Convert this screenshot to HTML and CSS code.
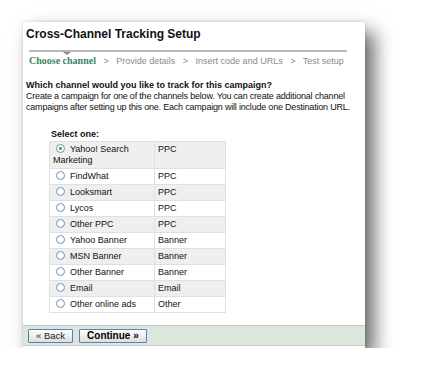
FILE: index.html
```html
<!DOCTYPE html>
<html lang="en">
<head>
  <meta charset="UTF-8">
  <title>Cross-Channel Tracking Setup</title>
  <link rel="stylesheet" href="styles.css">
</head>
<body>
  <div class="panel">
    <h1 class="title">Cross-Channel Tracking Setup</h1>
    <div class="steps">
      <span class="step current">Choose channel</span>
      <span class="sep">&gt;</span>
      <span class="step">Provide details</span>
      <span class="sep">&gt;</span>
      <span class="step">Insert code and URLs</span>
      <span class="sep">&gt;</span>
      <span class="step">Test setup</span>
    </div>
    <div class="intro">
      <p class="question">Which channel would you like to track for this campaign?</p>
      <p>Create a campaign for one of the channels below. You can create additional channel campaigns after setting up this one. Each campaign will include one Destination URL.</p>
    </div>
    <div class="select-area">
      <p class="select-label">Select one:</p>
      <table class="channels">
        <tr class="odd"><td class="name"><span class="radio on"></span>Yahoo! Search Marketing</td><td class="type">PPC</td></tr>
        <tr><td class="name"><span class="radio"></span>FindWhat</td><td class="type">PPC</td></tr>
        <tr class="odd"><td class="name"><span class="radio"></span>Looksmart</td><td class="type">PPC</td></tr>
        <tr><td class="name"><span class="radio"></span>Lycos</td><td class="type">PPC</td></tr>
        <tr class="odd"><td class="name"><span class="radio"></span>Other PPC</td><td class="type">PPC</td></tr>
        <tr><td class="name"><span class="radio"></span>Yahoo Banner</td><td class="type">Banner</td></tr>
        <tr class="odd"><td class="name"><span class="radio"></span>MSN Banner</td><td class="type">Banner</td></tr>
        <tr><td class="name"><span class="radio"></span>Other Banner</td><td class="type">Banner</td></tr>
        <tr class="odd"><td class="name"><span class="radio"></span>Email</td><td class="type">Email</td></tr>
        <tr><td class="name"><span class="radio"></span>Other online ads</td><td class="type">Other</td></tr>
      </table>
    </div>
    <div class="footer">
      <button class="btn">&laquo; Back</button>
      <button class="btn primary">Continue &raquo;</button>
    </div>
  </div>
</body>
</html>
```

FILE: styles.css
```css
body {
  margin: 0;
  background: #fff;
  font-family: 'Liberation Sans', Arial, sans-serif;
}
.panel {
  margin: 22px 0 0 23px;
  width: 342px;
  height: 326px;
  background: #fff;
  box-shadow: 9px 10px 18px rgba(0,0,0,0.6), 0 0 3px rgba(0,0,0,0.15);
  font-size: 9px;
  color: #111;
  display: flex;
  flex-direction: column;
}
.title {
  margin: 0;
  padding: 4px 3px 0;
  font-size: 12px;
  line-height: 16px;
  font-weight: bold;
}
.steps {
  position: relative;
  margin: 8px 18px 0 6px;
  border-top: 2px solid #b8b8b8;
  padding-top: 3px;
  color: #8a8a8a;
  white-space: nowrap;
  line-height: 12px;
}
.steps::before {
  content: "";
  position: absolute;
  left: 34px;
  top: 0;
  border-left: 4px solid transparent;
  border-right: 4px solid transparent;
  border-top: 3px solid #8a8a8a;
}
.step.current {
  color: #3f8461;
  font-weight: bold;
  font-family: 'Liberation Serif', serif;
  font-size: 10px;
}
.sep {
  margin: 0 5px;
}
.intro {
  margin: 13px 3px 0;
  line-height: 11px;
  letter-spacing: -0.2px;
}
.intro p {
  margin: 0;
}
.question {
  font-weight: bold;
  letter-spacing: 0;
}
.select-area {
  margin: 16px 0 0 26px;
}
.select-label {
  margin: 0 0 2px 2px;
  font-weight: bold;
}
.channels {
  border-collapse: collapse;
  width: 177px;
  border: 1px solid #e0e0e0;
}
.channels td {
  border: 1px solid #e0e0e0;
  padding: 2px 3px;
  line-height: 11px;
  height: 11px;
  vertical-align: top;
}
.channels tr.odd td {
  background: #efefef;
}
.channels td.name {
  width: 98px;
}
.radio {
  display: inline-block;
  width: 7px;
  height: 7px;
  margin: 0 5px -1px 3px;
  border: 1px solid #6f8fb5;
  border-radius: 50%;
  background: #fff;
  position: relative;
}
.radio.on::after {
  content: "";
  position: absolute;
  left: 2px;
  top: 2px;
  width: 3px;
  height: 3px;
  border-radius: 50%;
  background: #2fa52f;
}
.footer {
  margin-top: auto;
  margin-bottom: 2px;
  height: 19px;
  background: #dbe6dc;
  border-top: 1px solid #c8cfc8;
  border-bottom: 1px solid #c8cfc8;
  display: flex;
  align-items: center;
  gap: 6px;
  padding-left: 5px;
}
.btn {
  font-family: 'Liberation Sans', Arial, sans-serif;
  font-size: 9.5px;
  height: 14px;
  padding: 0 7px;
  border: 1px solid #5d7fb5;
  border-radius: 1px;
  background: linear-gradient(#fdfdfd, #dedede);
  color: #222;
  line-height: 12px;
}
.btn.primary {
  font-weight: bold;
  font-size: 10px;
  padding: 0 7px;
  color: #000;
}
```
